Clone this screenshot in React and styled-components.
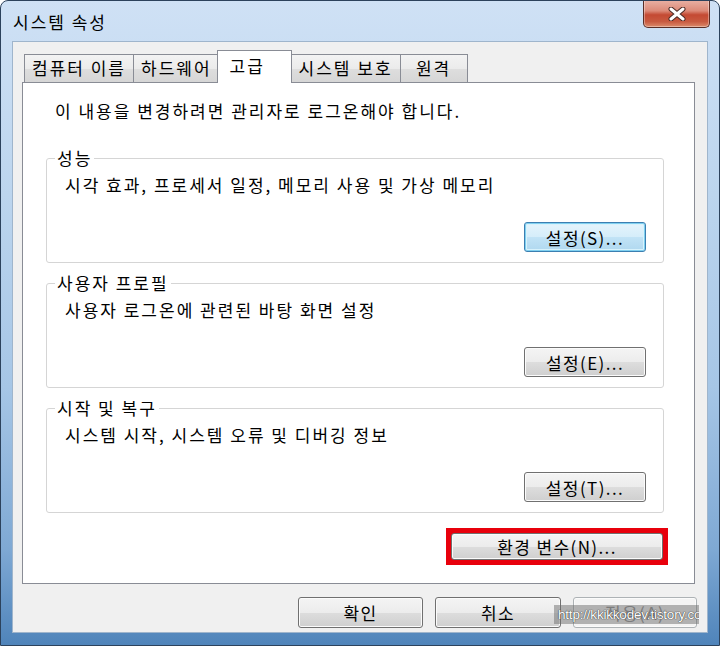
import styled, { createGlobalStyle } from "styled-components";

const GlobalStyle = createGlobalStyle`
  html, body {
    margin: 0;
    padding: 0;
    background: #ffffff;
  }
  body {
    font-family: "Noto Sans CJK KR", "Noto Sans", sans-serif;
    color: #000;
  }
`;

const Window = styled.div`
  position: relative;
  width: 720px;
  height: 646px;
  box-sizing: border-box;
  display: flex;
  flex-direction: column;
  padding: 0 11px 12px 11px;
  border: 1px solid #2c425c;
  border-radius: 8px 8px 0 0;
  overflow: hidden;
  background: linear-gradient(
    180deg,
    #cfe1f5 0%,
    #bcd5ee 30%,
    #a6c6e6 60%,
    #7fa9d4 85%,
    #4f84ba 100%
  );
`;

const TitleBar = styled.div`
  height: 41px;
  display: flex;
  align-items: flex-start;
`;

const Title = styled.div`
  margin: 11px 0 0 1px;
  font-size: 17px;
  line-height: 20px;
  letter-spacing: 2px;
`;

const CloseButton = styled.div`
  margin: -1px -2px 0 auto;
  width: 67px;
  height: 28px;
  box-sizing: border-box;
  display: flex;
  align-items: center;
  justify-content: center;
  border: 1px solid #5a2e26;
  border-top: none;
  border-radius: 0 0 5px 5px;
  background: linear-gradient(
    180deg,
    #e9b2a5 0%,
    #dc8a78 40%,
    #c44a33 55%,
    #c85a40 80%,
    #dc8c6c 100%
  );
  box-shadow: inset 0 0 0 1px rgba(255, 255, 255, 0.35);
`;

const Body = styled.div`
  flex: 1;
  display: flex;
  flex-direction: column;
  padding: 8px 12px 4px 9px;
  background: #f0f0f0;
  border: 1px solid #9fb5cc;
`;

const TabStrip = styled.div`
  display: flex;
  align-items: flex-end;
  padding-left: 2px;
  margin-bottom: -1px;
  position: relative;
  z-index: 1;
`;

const Tab = styled.div`
  box-sizing: border-box;
  min-width: ${(p) => (p.$active ? "75px" : "68px")};
  height: ${(p) => (p.$active ? "33px" : "28px")};
  margin: ${(p) => (p.$active ? "0 -1px 0 -2px" : "0 -1px 1px 0")};
  padding: ${(p) => (p.$active ? "4px 10px 0 12px" : "2px 7px 0")};
  text-align: ${(p) => (p.$active ? "left" : "center")};
  border: 1px solid #898c95;
  border-bottom: none;
  background: ${(p) =>
    p.$active
      ? "#ffffff"
      : "linear-gradient(180deg, #f3f3f3 0%, #ebebeb 50%, #dedede 51%, #d6d6d6 100%)"};
  font-size: 17px;
  line-height: 22px;
  letter-spacing: 2px;
  white-space: nowrap;
  position: relative;
  z-index: ${(p) => (p.$active ? 2 : 1)};
`;

const Panel = styled.div`
  display: flex;
  flex-direction: column;
  padding: 18px 30px 18px 23px;
  background: #ffffff;
  border: 1px solid #898c95;
`;

const Intro = styled.div`
  margin-left: 9px;
  font-size: 17px;
  line-height: 20px;
  letter-spacing: 2px;
`;

const GroupBox = styled.fieldset`
  margin: ${(p) => (p.$first ? "27px" : "10px")} 0 0;
  padding: 7px 17px 10px 18px;
  min-width: 0;
  border: 1px solid #d5d5d5;
  border-radius: 3px;
  box-shadow: inset 0 0 0 1px #ffffff;
`;

const Legend = styled.legend`
  margin-left: -10px;
  padding: 0 2px;
  font-size: 17px;
  line-height: 20px;
  letter-spacing: 2px;
`;

const Description = styled.div`
  font-size: 17px;
  line-height: 20px;
  letter-spacing: 2px;
`;

const ButtonRow = styled.div`
  display: flex;
  justify-content: flex-end;
  margin-top: 27px;
`;

const Button = styled.div`
  box-sizing: border-box;
  width: ${(p) => p.$width || 122}px;
  height: ${(p) => p.$height || 30}px;
  display: flex;
  align-items: center;
  justify-content: center;
  border: 1px solid ${(p) => (p.$focused ? "#3c7fb1" : p.$disabled ? "#adb2b5" : "#707070")};
  border-radius: 3px;
  font-size: 17px;
  letter-spacing: 1.4px;
  color: ${(p) => (p.$disabled ? "#8a8a8a" : "#000")};
  background: ${(p) =>
    p.$focused
      ? "linear-gradient(180deg, #e5f4fc 0%, #d5edfa 50%, #c1e3f6 51%, #b0d8ef 100%)"
      : p.$disabled
      ? "#f4f4f4"
      : "linear-gradient(180deg, #f4f4f4 0%, #ececec 50%, #dddddd 51%, #cfcfcf 100%)"};
  box-shadow: ${(p) =>
    p.$focused
      ? "inset 0 0 0 1px #7fd0f0, inset 0 0 0 2px #d8f2fc"
      : "inset 0 0 0 1px #fbfbfb"};
`;

const EnvRow = styled.div`
  display: flex;
  justify-content: flex-end;
  margin: 15px -4px 0 0;
`;

const Highlight = styled.div`
  border: 5px solid #e8000c;
  background: #e8000c;
`;

const DialogButtons = styled.div`
  display: flex;
  justify-content: flex-end;
  gap: 12px;
  margin: 13px -2px 0 0;
`;

const Watermark = styled.div`
  position: absolute;
  right: 20px;
  bottom: 21px;
  width: 145px;
  height: 19px;
  padding-left: 4px;
  box-sizing: border-box;
  overflow: hidden;
  white-space: nowrap;
  background: rgba(110, 110, 110, 0.5);
  color: #ffffff;
  font-family: "Liberation Sans", Arial, sans-serif;
  font-size: 13.5px;
  letter-spacing: -0.2px;
  line-height: 19px;
  text-shadow: 0 0 1px #333, 0 0 1px #333;
`;

const groups = [
  { legend: "성능", text: "시각 효과, 프로세서 일정, 메모리 사용 및 가상 메모리", button: "설정(S)...", focused: true },
  { legend: "사용자 프로필", text: "사용자 로그온에 관련된 바탕 화면 설정", button: "설정(E)..." },
  { legend: "시작 및 복구", text: "시스템 시작, 시스템 오류 및 디버깅 정보", button: "설정(T)..." },
];

const tabs = ["컴퓨터 이름", "하드웨어", "고급", "시스템 보호", "원격"];

function CloseIcon() {
  return (
    <svg width="20" height="14" viewBox="0 0 20 14">
      <path d="M4 2 L16 12 M16 2 L4 12" stroke="#4a2a24" strokeWidth="5" strokeLinecap="round" />
      <path d="M4 2 L16 12 M16 2 L4 12" stroke="#ffffff" strokeWidth="3" strokeLinecap="round" />
    </svg>
  );
}

export default function App() {
  return (
    <>
      <GlobalStyle />
      <Window>
        <TitleBar>
          <Title>시스템 속성</Title>
          <CloseButton>
            <CloseIcon />
          </CloseButton>
        </TitleBar>
        <Body>
          <TabStrip>
            {tabs.map((t) => (
              <Tab key={t} $active={t === "고급"}>
                {t}
              </Tab>
            ))}
          </TabStrip>
          <Panel>
            <Intro>이 내용을 변경하려면 관리자로 로그온해야 합니다.</Intro>
            {groups.map((g, i) => (
              <GroupBox key={g.legend} $first={i === 0}>
                <Legend>{g.legend}</Legend>
                <Description>{g.text}</Description>
                <ButtonRow>
                  <Button $focused={g.focused}>{g.button}</Button>
                </ButtonRow>
              </GroupBox>
            ))}
            <EnvRow>
              <Highlight>
                <Button $width={212} $height={27}>
                  환경 변수(N)...
                </Button>
              </Highlight>
            </EnvRow>
          </Panel>
          <DialogButtons>
            <Button $width={125} $height={31}>확인</Button>
            <Button $width={126} $height={31}>취소</Button>
            <Button $width={124} $height={31} $disabled>
              적용(A)
            </Button>
          </DialogButtons>
        </Body>
        <Watermark>http://kkikkodev.tistory.com</Watermark>
      </Window>
    </>
  );
}
